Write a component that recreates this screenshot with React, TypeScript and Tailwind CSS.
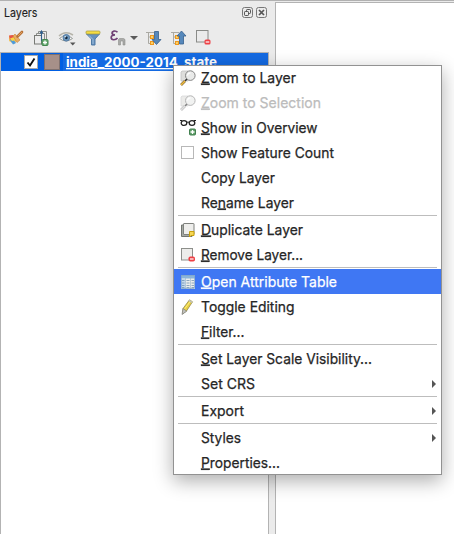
import type { ReactNode } from "react";

type IconProps = { children: ReactNode; w?: number; h?: number; className?: string };

function Svg({ children, w = 16, h = 16, className = "" }: IconProps) {
  return (
    <svg width={w} height={h} viewBox={`0 0 ${w} ${h}`} fill="none" className={`block shrink-0 ${className}`}>
      {children}
    </svg>
  );
}

function Magnifier({ dim = false }: { dim?: boolean }) {
  return (
    <Svg className={dim ? "opacity-60" : ""}>
      <path d="M2 1h6v10H1V2z" fill="#dededc" stroke="#bbb" strokeWidth=".7" />
      <path d="M7 9 5 11" stroke="#333" strokeWidth="1.6" />
      <path d="m5 11-4 4" stroke={dim ? "#999" : "#8b7141"} strokeWidth="2.6" />
      <path d="m5 11-4 4" stroke={dim ? "#ccc" : "#f1bd3b"} strokeWidth="1.3" />
      <circle cx="10.3" cy="5.6" r="4.8" fill="#e9eae9" stroke="#858585" />
      <path d="M7.5 5.5a3 3 0 0 1 3-2.6" stroke="#fff" strokeWidth="1.2" />
    </Svg>
  );
}

function Glasses() {
  return (
    <Svg h={17}>
      <path d="M0 1.5h2l1 1M16 1.5h-2l-1 1M6.5 3.5q1.5-1 3 0" stroke="#222" />
      <ellipse cx="4" cy="4" rx="2.8" ry="2.4" fill="#fff" stroke="#222" strokeWidth="1.3" />
      <ellipse cx="12" cy="4" rx="2.8" ry="2.4" fill="#fff" stroke="#222" strokeWidth="1.3" />
      <rect x="9.500" y="10" width="6" height="6" rx="1" fill="#5b9b64" stroke="#428050" />
      <path d="M12.500 11v4M10.500 13h4" stroke="#fff" strokeWidth="1.300" />
    </Svg>
  );
}

function CheckSquare() {
  return (
    <Svg>
      <rect x="1.500" y="1.500" width="12" height="12" fill="#fff" stroke="#b8b8b8" />
    </Svg>
  );
}

function Duplicate() {
  return (
    <Svg>
      <path d="M3 3H1.500v11.500H12v-2" fill="#a6aaa4" stroke="#727571" />
      <rect x="3.500" y="1.500" width="10.500" height="11" rx=".5" fill="#eeeeec" stroke="#80827e" />
      <path d="M9.500 9.500h4.500v4h-3l-1.500 1.500z" fill="#f6d755" stroke="#c9a10d" />
    </Svg>
  );
}

function RemoveLayer() {
  return (
    <Svg>
      <rect x="1.500" y="1.500" width="11" height="11.500" fill="#ededeb" stroke="#8d8f8b" />
      <rect x="8.500" y="9.500" width="6.500" height="5" rx="1.800" fill="#ee4146" />
      <path d="M10 12h3.600" stroke="#fff" strokeWidth="1.200" />
    </Svg>
  );
}

function TableIcon() {
  return (
    <Svg>
      <rect x="1" y="1" width="14" height="14" fill="#eceeec" />
      <path d="M1 1h14v3.500H1z" fill="#8ab4da" />
      <path d="M1 4.500h4.500V15H1z" fill="#c4d9ec" />
      <path d="M5.500 4v11M10.500 4v11" stroke="#9bb4cb" strokeWidth=".6" />
      <path d="M2 6.500h2.500M6.500 6.500h3M11.500 6.500h2.500M2 9h2.500M6.500 9h3M11.500 9h2.500M2 11.500h2.500M6.500 11.500h3M11.500 11.500h2.500M2 13.500h2.500M6.500 13.500h3M11.500 13.500h2.500" stroke="#6688aa" strokeWidth=".7" />
      <rect x="1.500" y="1.500" width="13" height="13" stroke="#7fa3c8" strokeWidth=".7" />
    </Svg>
  );
}

function Pencil() {
  return (
    <Svg>
      <path d="m3 9.500 6.500-8.700 3 2L6.500 12 2.500 15z" fill="#e8cf45" stroke="#8a8040" strokeWidth=".7" />
      <path d="m3 9.500-1 6 4.700-3.300z" fill="#bfc0bc" stroke="#777" strokeWidth=".6" />
      <path d="m4.700 9.800 6-8" stroke="#fff07b" />
      <path d="m9.500.8 3 2-.9 1.300L8.500 2.100z" fill="#c2c3bd" />
    </Svg>
  );
}

function StyleBrush() {
  return (
    <Svg>
      <path d="m1 6 5-1 4 5-4 4-5-3z" fill="#f2c55b" />
      <path d="m1 5.500 4-.5 2 3-5 2z" fill="#e65349" />
      <path d="m2 10 3-1 3 4-3 1.500z" fill="#4e9bde" />
      <path d="m2 8.500 4-1.500 2 3-4 1z" fill="#f5d547" />
      <path d="m7 4 5 6-3 2.500L5 6z" fill="#e9ad65" stroke="#c98138" strokeWidth=".6" />
      <path d="m9.500 6.500 4.500-4.500" stroke="#b87337" strokeWidth="2.600" strokeLinecap="round" />
      <path d="m10 6 4-4" stroke="#e0a060" />
    </Svg>
  );
}

function AddGroup() {
  return (
    <Svg>
      <path d="M5.500 4V1.500h8v8H12M3.500 6V3.500h8v8H10" stroke="#8d8f8b" />
      <rect x="1.500" y="5.500" width="7" height="8.500" fill="#ececec" stroke="#777975" />
      <path d="M8.500 11V1.500M7 3.500l1.500-2.500L10 3.500" stroke="#315f8d" strokeWidth="1.100" />
      <rect x="9" y="9.500" width="6" height="6" rx="1" fill="#61a86b" stroke="#438650" />
      <path d="M12 10.500v4M10 12.500h4" stroke="#fff" strokeWidth="1.300" />
    </Svg>
  );
}

function Eye() {
  return (
    <Svg w={18}>
      <path d="M1 6q6-6 14-1" stroke="#b5b3a9" strokeWidth="1.500" />
      <path d="M1.500 8.500q6.500-6 13 0-6.500 5-13 0" fill="#f8f8f8" stroke="#979b98" />
      <circle cx="8.300" cy="7.800" r="3.300" fill="#6d98be" stroke="#557da5" />
      <circle cx="8.300" cy="7.800" r="1.400" fill="#14283d" />
      <circle cx="7.200" cy="6.800" r=".7" fill="#fff" />
      <path d="M12 12.500h5.500l-2.750 3z" fill="#555" />
    </Svg>
  );
}

function FilterIcon() {
  return (
    <Svg>
      <path d="M1.500 4h13L10 9v6H6.500V9z" fill="#6490bd" stroke="#507ba5" />
      <path d="m4 5.500 4 4V14" stroke="#a3c0dc" />
      <rect x="1" y="1" width="14" height="3" rx="1" fill="#f5dd42" stroke="#a99f48" strokeWidth=".8" />
    </Svg>
  );
}

function Expression() {
  return (
    <Svg>
      <path d="M7.500 2.300C5.500.1 2 1 2 3.100c0 1.200 1.200 1.800 3 1.800-2.500 0-3.800 1-3.800 2.600 0 2.900 4.300 2.900 6.300.5" stroke="#704174" strokeWidth="1.700" />
      <path d="M8.500 15V9.500l1-1h4l1.500 1V15h-2v-4h-2.500v4z" fill="#a9aaa8" stroke="#8d8e8c" strokeWidth=".6" />
    </Svg>
  );
}

function TreeArrow({ up = false }: { up?: boolean }) {
  return (
    <Svg>
      <path d="M8 2.500H2.500v11H5M3 7h2M0 2.500h3" stroke="#aaa9a3" />
      <rect x="4.500" y="5.500" width="3" height="3" fill="#f9d06b" stroke="#ee981d" />
      <rect x="4.500" y="11.500" width="3" height="3" fill="#f9d06b" stroke="#ee981d" />
      <path
        d={up ? "M10.500 1 6 6h2.500v8h4V6H15z" : "M8.500 1.500h4v8H15l-4.500 5-4.500-5h2.500z"}
        fill="#5688bb"
        stroke="#365f8d"
        strokeWidth=".8"
      />
    </Svg>
  );
}

type Item = {
  before?: string;
  mnemonic?: string;
  after: string;
  width: number;
  icon?: ReactNode;
  disabled?: boolean;
  active?: boolean;
  submenu?: boolean;
};

const groups: Item[][] = [
  [
    { mnemonic: "Z", after: "oom to Layer", width: 95, icon: <Magnifier /> },
    { mnemonic: "Z", after: "oom to Selection", width: 120, icon: <Magnifier dim />, disabled: true },
    { mnemonic: "S", after: "how in Overview", width: 116.5, icon: <Glasses /> },
    { after: "Show Feature Count", width: 133, icon: <CheckSquare /> },
    { after: "Copy Layer", width: 74 },
    { before: "Re", mnemonic: "n", after: "ame Layer", width: 93 },
  ],
  [
    { mnemonic: "D", after: "uplicate Layer", width: 102, icon: <Duplicate /> },
    { mnemonic: "R", after: "emove Layer...", width: 102, icon: <RemoveLayer /> },
  ],
  [
    { mnemonic: "O", after: "pen Attribute Table", width: 136, icon: <TableIcon />, active: true },
    { after: "Toggle Editing", width: 93.5, icon: <Pencil /> },
    { mnemonic: "F", after: "ilter...", width: 43.5 },
  ],
  [
    { mnemonic: "S", after: "et Layer Scale Visibility...", width: 171 },
    { after: "Set CRS", width: 54, submenu: true },
  ],
  [{ after: "Export", width: 43, submenu: true }],
  [
    { after: "Styles", width: 40, submenu: true },
    { mnemonic: "P", after: "roperties...", width: 79 },
  ],
];

function MenuLabel({ item }: { item: Item }) {
  return (
    <svg width={item.width + 2} height="25" className="block shrink-0 overflow-visible">
      <text
        x="0"
        y="17.500"
        textLength={item.width}
        lengthAdjust="spacingAndGlyphs"
        fill="currentColor"
        stroke="currentColor"
        strokeWidth=".25"
      >
        {item.before}
        {item.mnemonic && <tspan className="underline decoration-1 underline-offset-[3px]">{item.mnemonic}</tspan>}
        {item.after}
      </text>
    </svg>
  );
}

function MenuRow({ item }: { item: Item }) {
  const color = item.active ? "bg-[#3f77f3] text-white" : item.disabled ? "text-[#bcbcbc]" : "text-[#262626]";
  return (
    <div className={`flex h-[25px] items-center pl-[7px] pr-1.5 ${color}`}>
      <span className="flex w-[21px] shrink-0">{item.icon}</span>
      <MenuLabel item={item} />
      {item.submenu && <span className="ml-auto h-0 w-0 border-y-4 border-l-[4px] border-y-transparent border-l-[#555]" />}
    </div>
  );
}

function ContextMenu() {
  return (
    <div className="absolute left-[173px] top-[65px] h-[410px] w-[269px] bg-white text-[14.500px] shadow-[0_6px_18px_rgba(0,0,0,0.32)] after:pointer-events-none after:absolute after:inset-0 after:border after:border-[#929292]">
      {groups.map((group, i) => (
        <div key={i}>
          {i > 0 && <div className="mx-[5px] mb-px h-px bg-[#bdbdbd]" />}
          {group.map((item) => (
            <MenuRow key={item.after} item={item} />
          ))}
        </div>
      ))}
    </div>
  );
}

export default function App() {
  return (
    <div className="relative flex h-[534px] w-[454px] overflow-hidden border-t border-[#b1b1b1] bg-[#ebebeb] font-['Inter','Liberation_Sans',sans-serif]">
      <aside className="flex w-[269px] shrink-0 flex-col">
        <header className="flex h-[22px] items-center pl-1 pr-[2px] text-[12px] text-[#1e1e1e]">
          <svg width="40" height="18" className="block overflow-visible">
            <text x="0" y="13.500" textLength="33.500" lengthAdjust="spacingAndGlyphs" fill="currentColor" stroke="currentColor" strokeWidth=".15">
              Layers
            </text>
          </svg>
          <span className="ml-auto flex gap-[3px]">
            <Svg w={11} h={11}>
              <rect x=".5" y=".5" width="10" height="10" rx="2" stroke="#777" />
              <rect x="4.500" y="2.500" width="4" height="4" rx=".7" stroke="#555" />
              <rect x="2.500" y="4.500" width="4" height="4" rx=".7" fill="#ebebeb" stroke="#555" />
            </Svg>
            <Svg w={11} h={11}>
              <rect x=".5" y=".5" width="10" height="10" rx="2" stroke="#777" />
              <path d="m3 3 5 5m0-5L3 8" stroke="#555" strokeWidth="1.700" />
            </Svg>
          </span>
        </header>
        <div className="flex h-[29px] items-center pl-2">
          <div className="flex items-center gap-[9px]">
            <StyleBrush />
            <AddGroup />
            <Eye />
            <FilterIcon />
            <Expression />
          </div>
          <span className="ml-1 mt-px h-0 w-0 border-x-4 border-t-4 border-x-transparent border-t-[#5a5a5a]" />
          <div className="ml-2 flex items-center gap-[9px]">
            <TreeArrow />
            <TreeArrow up />
            <Svg>
              <rect x=".5" y=".5" width="11.500" height="11.500" stroke="#8a8b88" />
              <rect x="8.500" y="9.500" width="6" height="5" rx="1.500" fill="#ee4146" />
              <path d="M9.700 12h3.600" stroke="#fff" strokeWidth="1.200" />
            </Svg>
          </div>
        </div>
        <main className="flex-1 border border-b-0 border-[#b3b3b3] bg-white">
          <div className="flex h-[18px] items-center bg-[#005fe3] text-[13px] font-bold text-white">
            <span className="ml-[23px] flex h-[14px] w-[14px] items-center justify-center border border-[#aaa] bg-white">
              <Svg w={10} h={11}>
                <path d="m1.500 5.500 2.500 3L8.500 1.500" stroke="#111" strokeWidth="1.900" />
              </Svg>
            </span>
            <span className="ml-[6px] h-4 w-4 border border-[#7e7170] bg-[#a69089]" />
            <div className="ml-[3px] flex h-full flex-1 items-center bg-[#146ae2] pl-[3px]">
              <svg width="152" height="18" className="block overflow-visible">
                <text x="0" y="14" textLength="151" lengthAdjust="spacingAndGlyphs" fill="white" className="underline decoration-1 underline-offset-2">
                  india_2000-2014_state
                </text>
              </svg>
            </div>
          </div>
        </main>
      </aside>
      <div className="w-[6px] shrink-0" />
      <section className="mt-px flex-1 border-l border-t border-[#b3b3b3] bg-white" />
      <div className="absolute inset-0 -top-px">
        <ContextMenu />
      </div>
    </div>
  );
}
